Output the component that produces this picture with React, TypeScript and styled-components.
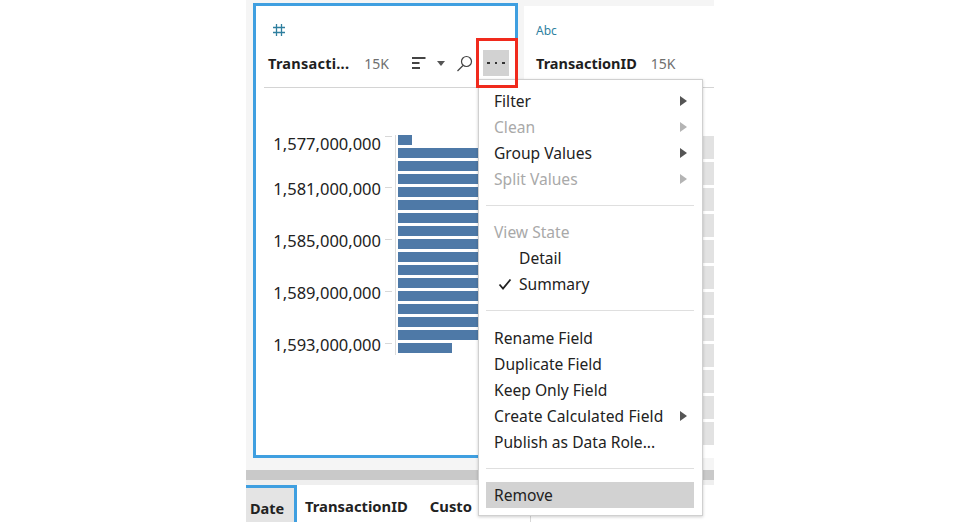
import React from "react";
import styled, { createGlobalStyle } from "styled-components";

const Global = createGlobalStyle`
  html, body { margin: 0; padding: 0; background: #fff; }
  body { width: 961px; height: 522px; overflow: hidden; font-family: "Noto Sans", "Open Sans", sans-serif; }
`;

const Stage = styled.div`
  position: relative;
  margin-left: 246px;
  width: 468px;
  height: 522px;
  overflow: hidden;
  background: #fff;
  display: flex;
  flex-direction: column;
`;
const Columns = styled.div`
  display: flex;
  height: 470px;
  background: #f5f5f5;
  padding: 3px 0 12px 7px;
  box-sizing: border-box;
  gap: 6px;
  flex: none;
`;
const SelectedCard = styled.section`
  width: 265px;
  box-sizing: border-box;
  border: 3px solid #3f9fe0;
  background: #fff;
  padding: 0 8px;
  flex: none;
`;
const PlainCard = styled.section`
  flex: 1;
  background: #fff;
  padding: 0 0 0 12px;
  display: flex;
  flex-direction: column;
  margin-top: 3px;
  overflow: hidden;
`;
const TypeRow = styled.div`
  height: 36px;
  padding: 17px 0 0 8px;
  box-sizing: border-box;
  color: #2f7f9f;
`;
const PlainType = styled.div`
  height: 36px;
  flex: none;
  padding-top: 13px;
  box-sizing: border-box;
  color: #2f7f9f;
  font-size: 12px;
  line-height: 24px;
`;
const HeaderRow = styled.div`
  display: flex;
  align-items: center;
  height: 46px;
  box-sizing: border-box;
  padding: 0 0 3px 4px;
  border-bottom: 1px solid #d4d4d4;
  flex: none;
`;
const PlainHeader = styled(HeaderRow)`
  padding-left: 0;
`;
const FieldName = styled.span`
  font-weight: 700;
  font-size: 14.5px;
  color: #1e1e1e;
`;
const TruncatedName = styled(FieldName)`
  width: 82px;
  white-space: nowrap;
  letter-spacing: 0.25px;
`;
const Count = styled.span`
  font-size: 14px;
  color: #6f6f6f;
  margin-left: 14px;
`;
const SelectedCount = styled(Count)`
  margin-left: 15px;
`;
const ToolIcon = styled.svg<{ $gap?: number }>`
  display: block;
  flex: none;
  margin-left: ${(p) => p.$gap ?? 0}px;
`;
const MoreButton = styled.div`
  width: 26px;
  height: 26px;
  background: #d2d2d2;
  display: flex;
  align-items: center;
  justify-content: center;
  gap: 5px;
  margin-left: 10px;
  flex: none;
`;
const Dot = styled.i`
  width: 2.5px;
  height: 2.5px;
  background: #333;
  display: block;
`;
const Chart = styled.div`
  display: grid;
  grid-template-columns: 132px 1fr;
  margin-top: 47px;
  height: 220px;
`;
const AxisLabels = styled.div`
  position: relative;
  border-right: 1px solid #dcdcdc;
`;
const AxisLabel = styled.div<{ $top: number; $tick: number }>`
  position: absolute;
  right: 14px;
  top: ${(p) => p.$top}px;
  font-size: 16.5px;
  line-height: 20px;
  color: #222;
  white-space: nowrap;
  &::after {
    content: "";
    position: absolute;
    right: -11px;
    top: ${(p) => p.$tick}px;
    width: 7px;
    height: 1px;
    background: #d8d8d8;
  }
`;
const Bars = styled.div`
  display: flex;
  flex-direction: column;
  gap: 3px;
  padding-left: 2px;
`;
const Bar = styled.div<{ $w: number }>`
  height: 10px;
  width: ${(p) => p.$w}px;
  background: #4e79a7;
  flex: none;
`;
const Stripes = styled.div`
  margin-top: 48px;
  display: flex;
  flex-direction: column;
  gap: 3px;
`;
const Stripe = styled.div`
  height: 23px;
  background: #e2e2e2;
  flex: none;
`;
const Scrollbar = styled.div`
  height: 10px;
  background: #c9c9c9;
  border-bottom: 5px solid #efefef;
  flex: none;
`;
const Tabs = styled.nav`
  display: flex;
  align-items: stretch;
  height: 37px;
  flex: none;
  background: #fff;
`;
const ActiveTab = styled.div`
  width: 51px;
  box-sizing: border-box;
  background: #e4e4e4;
  border-top: 3px solid #3f9fe0;
  border-right: 3px solid #3f9fe0;
  font-weight: 700;
  font-size: 14.5px;
  color: #222;
  padding: 10px 0 0 4px;
  line-height: 20px;
`;
const Tab = styled.div`
  font-weight: 700;
  font-size: 14.8px;
  color: #222;
  padding: 11px 0 0 8px;
  margin-right: 14px;
  line-height: 20px;
`;
const Menu = styled.div`
  position: absolute;
  left: 232px;
  top: 79px;
  width: 225px;
  height: 437px;
  box-sizing: border-box;
  background: #fff;
  border: 1px solid #d0d0d0;
  box-shadow: 0 1px 3px rgba(0, 0, 0, 0.2);
  padding: 8px 8px 0 7px;
  display: flex;
  flex-direction: column;
`;
const MenuItem = styled.div<{ $disabled?: boolean; $active?: boolean; $indent?: boolean }>`
  height: 26px;
  flex: none;
  display: flex;
  align-items: center;
  justify-content: space-between;
  position: relative;
  padding-left: ${(p) => (p.$indent ? 33 : 8)}px;
  padding-right: 7px;
  font-size: 15.6px;
  color: ${(p) => (p.$disabled ? "#a9a9a9" : "#222")};
  background: ${(p) => (p.$active ? "#d2d2d2" : "transparent")};
`;
const CalculatedItem = styled(MenuItem)`
  letter-spacing: 0.1px;
`;
const Arrow = styled.i<{ $disabled?: boolean }>`
  width: 0;
  height: 0;
  border-left: 7px solid ${(p) => (p.$disabled ? "#b4b4b4" : "#555")};
  border-top: 5px solid transparent;
  border-bottom: 5px solid transparent;
  display: block;
`;
const Check = styled.svg`
  position: absolute;
  left: 12px;
  top: 7px;
`;
const Divider = styled.hr<{ $after: number }>`
  border: 0;
  height: 1px;
  background: #dfdfdf;
  margin: 13px 0 ${(p) => p.$after}px;
  flex: none;
`;
const Callout = styled.div`
  position: absolute;
  left: 230px;
  top: 38px;
  width: 42px;
  height: 50px;
  box-sizing: border-box;
  border: 3px solid #f02a1d;
`;
const Continuation = styled.div`
  position: absolute;
  left: 284px;
  top: 516px;
  width: 1px;
  height: 6px;
  background: #d8d8d8;
`;

const labels = [
  ["1,577,000,000", -1, 2],
  ["1,581,000,000", 44, 8],
  ["1,585,000,000", 96, 8],
  ["1,589,000,000", 148, 8],
  ["1,593,000,000", 200, 8],
] as const;
const bars = [14, ...Array(15).fill(90), 54];

export default function App() {
  return (
    <>
      <Global />
      <Stage>
        <Columns>
          <SelectedCard>
            <TypeRow>
              <ToolIcon width="14" height="14" viewBox="0 0 14 14" fill="none" stroke="#2f7f9f" strokeWidth="1.3">
                <path d="M4.5 1v12M9.5 1v12M1 4.5h12M1 9.5h12" />
              </ToolIcon>
            </TypeRow>
            <HeaderRow>
              <TruncatedName>Transacti...</TruncatedName>
              <SelectedCount>15K</SelectedCount>
              <ToolIcon $gap={23} width="14" height="14" viewBox="0 0 14 14" fill="#444">
                <path d="M0 1h13.5v2H0zM0 6h7.5v2H0zM0 11h8v2H0z" />
              </ToolIcon>
              <ToolIcon $gap={11} width="8" height="5" viewBox="0 0 8 5" fill="#555">
                <path d="M0 0h8L4 5z" />
              </ToolIcon>
              <ToolIcon $gap={11} width="17" height="17" viewBox="0 0 17 17" fill="none" stroke="#444" strokeWidth="1.2">
                <circle cx="10.5" cy="6.5" r="5" />
                <path d="M7 10.5 1.5 16" />
              </ToolIcon>
              <MoreButton><Dot /><Dot /><Dot /></MoreButton>
            </HeaderRow>
            <Chart>
              <AxisLabels>
                {labels.map(([text, top, tick]) => (
                  <AxisLabel key={text} $top={top} $tick={tick}>{text}</AxisLabel>
                ))}
              </AxisLabels>
              <Bars>
                {bars.map((w, i) => <Bar key={i} $w={w} />)}
              </Bars>
            </Chart>
          </SelectedCard>
          <PlainCard>
            <PlainType>Abc</PlainType>
            <PlainHeader>
              <FieldName>TransactionID</FieldName>
              <Count>15K</Count>
            </PlainHeader>
            <Stripes>
              {Array.from({ length: 12 }).map((_, i) => <Stripe key={i} />)}
            </Stripes>
          </PlainCard>
        </Columns>
        <Scrollbar />
        <Tabs>
          <ActiveTab>Date</ActiveTab>
          <Tab>TransactionID</Tab>
          <Tab>Custo</Tab>
        </Tabs>
        <Continuation />
        <Menu>
          <MenuItem>Filter<Arrow /></MenuItem>
          <MenuItem $disabled>Clean<Arrow $disabled /></MenuItem>
          <MenuItem>Group Values<Arrow /></MenuItem>
          <MenuItem $disabled>Split Values<Arrow $disabled /></MenuItem>
          <Divider $after={13} />
          <MenuItem $disabled>View State</MenuItem>
          <MenuItem $indent>Detail</MenuItem>
          <MenuItem $indent>
            <Check width="14" height="12" viewBox="0 0 14 12" fill="none" stroke="#222" strokeWidth="1.8">
              <path d="M1.5 6.5 5 10.5 12.5 1.5" />
            </Check>
            Summary
          </MenuItem>
          <Divider $after={14} />
          <MenuItem>Rename Field</MenuItem>
          <MenuItem>Duplicate Field</MenuItem>
          <MenuItem>Keep Only Field</MenuItem>
          <CalculatedItem>Create Calculated Field<Arrow /></CalculatedItem>
          <MenuItem>Publish as Data Role...</MenuItem>
          <Divider $after={13} />
          <MenuItem $active>Remove</MenuItem>
        </Menu>
        <Callout />
      </Stage>
    </>
  );
}
